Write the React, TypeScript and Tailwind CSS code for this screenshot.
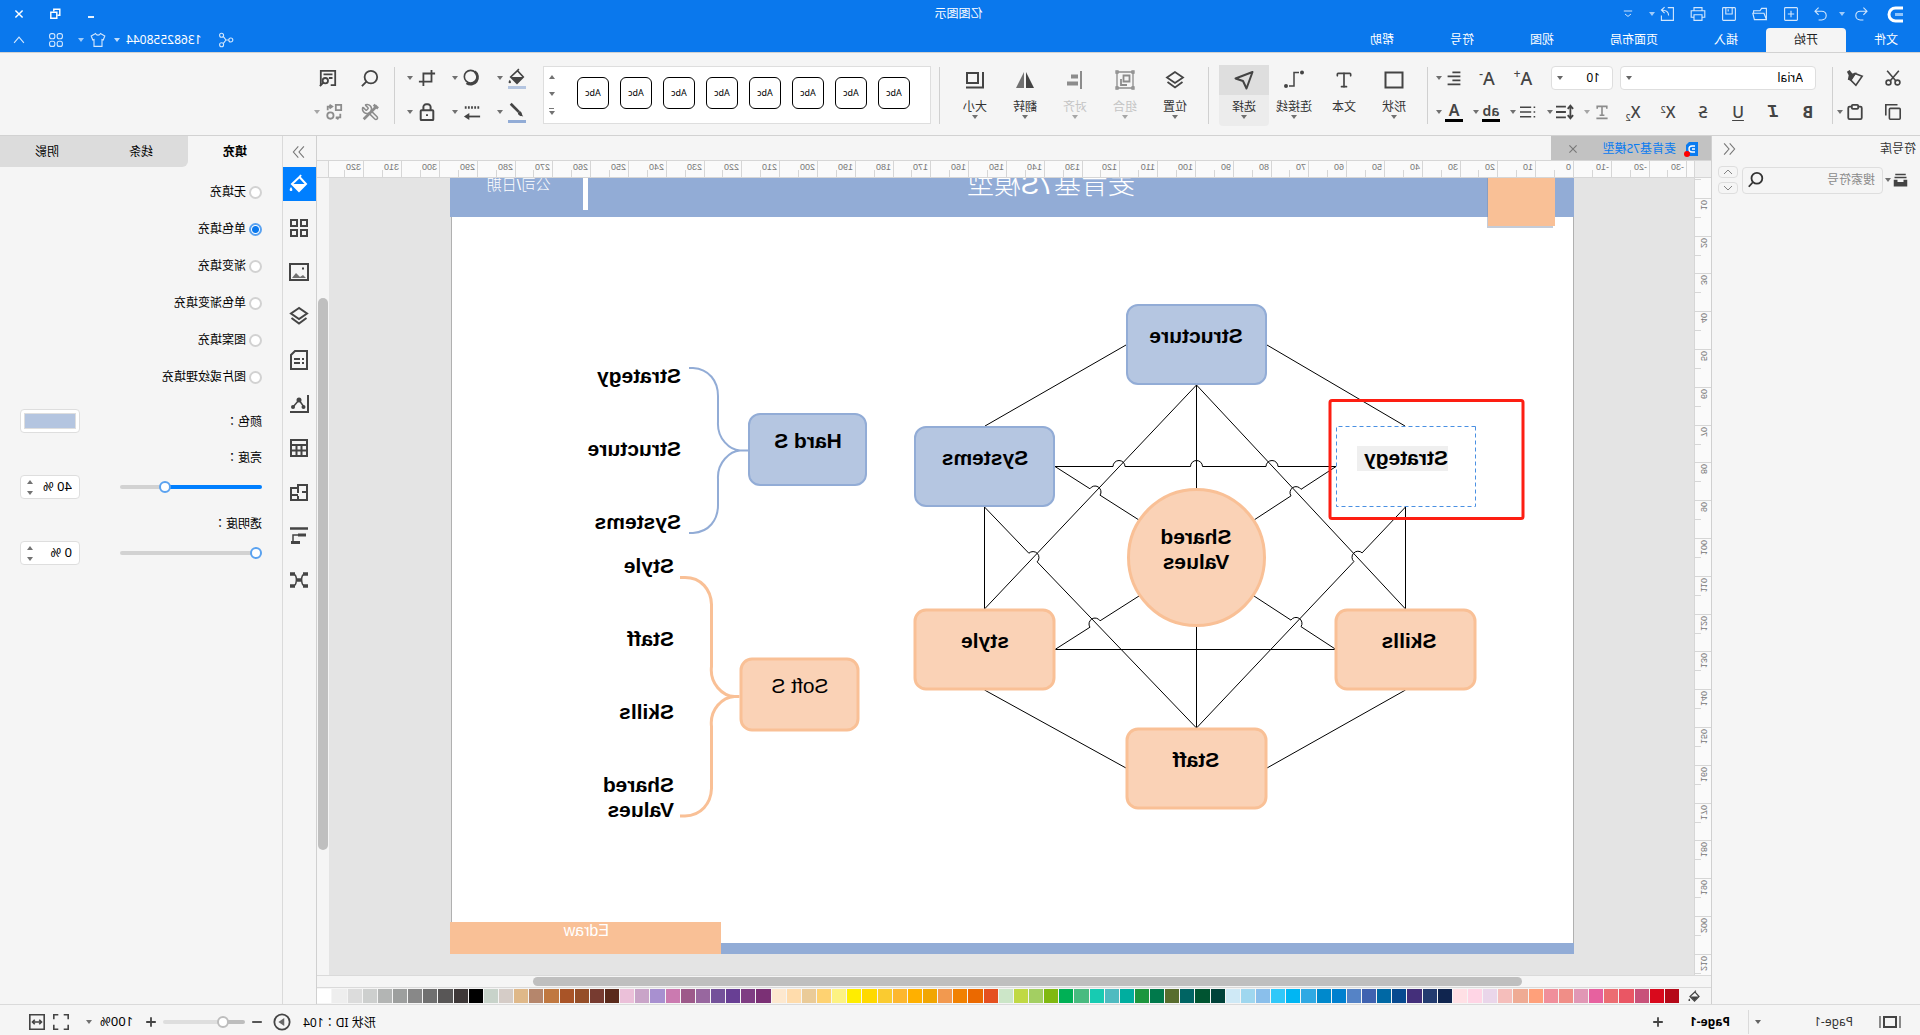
import React, { useState } from "react";
import clsx from "clsx";
import { Type, Wrench } from "lucide-react";

const menuTabs = ["文件", "开始", "插入", "页面布局", "视图", "符号", "帮助"];

const fillTypes = [
  "无填充",
  "单色填充",
  "渐变填充",
  "单色渐变填充",
  "图案填充",
  "图片或纹理填充",
];

const palette = [
  "#b50918", "#d9091c", "#c8527a", "#ea5664", "#ec6d72", "#e7619f", "#e197b5", "#f08e87", "#f08f9b", "#ffa07a",
  "#efab94", "#f5bebb", "#ead6ea", "#ffd5e5", "#ffe0e5", "#10254f", "#233b6f", "#442f7a", "#074a90", "#0068a4",
  "#3f62b0", "#5583c6", "#0080cf", "#0089cc", "#2fa9e3", "#00b6f3", "#30c8f9", "#8abfeb", "#9fd7ef", "#cfe9f6",
  "#00423a", "#005431", "#006463", "#586d2e", "#00794b", "#1c963e", "#00ae9f", "#4fbbc0", "#17cbb2", "#49bb80",
  "#00b055", "#80b910", "#a3cf62", "#c0d944", "#cce6c8", "#e5501f", "#eb6900", "#f18101", "#f2994f", "#f1a602",
  "#ffb000", "#fdb72f", "#facb30", "#ffd900", "#ffed00", "#fdf282", "#fed271", "#eacb98", "#ffdcac", "#fde8cf",
  "#7b3075", "#7f3d83", "#683f94", "#74529a", "#98679f", "#9d5a8a", "#cb7ab0", "#a890d0", "#c9a4c8", "#ebc0d9",
  "#5a2a1b", "#773b30", "#954e28", "#a95427", "#c07840", "#b5866c", "#dfb889", "#d5ccc7", "#c8d3ca", "#000000",
  "#3e3838", "#585656", "#707070", "#888888", "#9d9f9e", "#b3b5b4", "#cdcfce", "#dcdcdc", "#eeeeee", "#ffffff",
];

interface IconProps {
  children: React.ReactNode;
  size?: number;
  w?: number;
}

// every icon is drawn on a 20 x 20 grid
const Icon = ({ children, size = 20, w = 1.8 }: IconProps) => (
  <svg
    width={size}
    height={size}
    viewBox="0 0 20 20"
    fill="none"
    stroke="currentColor"
    strokeWidth={w}
    className="shrink-0"
  >
    {children}
  </svg>
);

const Caret = ({ up = false }: { up?: boolean }) => (
  <svg width="6" height="4" viewBox="0 0 6 4" className="shrink-0 opacity-75">
    <path d={up ? "M0 4h6L3 0z" : "M0 0h6L3 4z"} fill="currentColor" />
  </svg>
);

// full-width colon, centred in its cell
const Colon = () => <span className="font-['Noto_Sans_CJK_TC',sans-serif]">：</span>;

const Divider = () => <div className="h-[57px] w-px shrink-0 bg-[#d0d0d0]" />;

interface ToolProps {
  label: string;
  caret?: boolean;
  disabled?: boolean;
  wide?: boolean;
  children: React.ReactNode;
}

const Tool = ({ label, caret, disabled, wide, children }: ToolProps) => (
  <button
    aria-label={label}
    disabled={disabled}
    className={clsx(
      "flex h-6 shrink-0 items-center",
      wide ? "gap-1" : "gap-0.5",
      disabled ? "text-[#8c8c8c]" : "text-[#444444]"
    )}
  >
    <span className="flex w-5 justify-center">{children}</span>
    {caret && <Caret />}
  </button>
);

interface BigToolProps {
  label: string;
  active?: boolean;
  disabled?: boolean;
  caret?: boolean;
  children: React.ReactNode;
}

const BigTool = ({ label, active, disabled, caret = true, children }: BigToolProps) => (
  <button
    disabled={disabled}
    className={clsx(
      "flex h-[61px] w-[50px] shrink-0 flex-col items-center rounded-sm",
      active && "bg-[#ececec]",
      disabled ? "text-[#8c8c8c]" : "text-[#444444]"
    )}
  >
    <span className={clsx("flex h-[30px] w-full items-center justify-center", active && "bg-[#dedede]")}>
      {children}
    </span>
    <span className={clsx("mt-1 h-4 leading-4", disabled ? "text-[#c4c4c4]" : "text-[#333333]")}>{label}</span>
    {caret && (
      <span className="flex h-1">
        <Caret />
      </span>
    )}
  </button>
);

const BucketShape = () => (
  <>
    <path d="M8 1l1.500 2M9.500 3l7.500 7-7 7-7-7z" />
    <path d="M3.500 10h13l-6.500 6.500z" fill="currentColor" stroke="none" />
    <path d="M18 13c-2 2.500-1.500 4 0 4s2-1.500 0-4z" fill="currentColor" stroke="none" />
  </>
);

const LayersShape = () => (
  <>
    <path d="M10 2l8 5.500-8 5.500-8-5.500z" />
    <path d="M2.500 12l7.500 5.500 7.500-5.500" />
  </>
);

const Header = () => (
  <header className="bg-[#0a78ed] text-white">
    <div className="flex h-7 items-center">
      <div className="flex flex-1 items-center pl-4 text-[#d3e7fd]">
        <svg width="17" height="17" viewBox="0 0 17 17" fill="none" stroke="white" strokeWidth="3">
          <path d="M1 2h7.500a6.500 6.500 0 0 1 0 13H1" />
          <path d="M1 8.500h8" stroke="#8fc4fb" />
        </svg>
        <button aria-label="撤销" className="ml-[18px] flex items-center gap-2">
          <Icon size={16} w={1.4}>
            <path d="M7 2L2.500 6.500 7 11M3 6.500h8a5.500 5.500 0 0 1 0 11H7" />
          </Icon>
          <Caret />
        </button>
        <button aria-label="恢复" className="ml-[10px]">
          <Icon size={16} w={1.4}>
            <path d="M13 2l4.500 4.500L13 11M17 6.500H9a5.500 5.500 0 0 0 0 11h4" />
          </Icon>
        </button>
        <div className="ml-[14px] flex gap-[15px]">
          <button aria-label="新建">
            <Icon size={16} w={1.4}>
              <rect x="2" y="2" width="16" height="16" rx="1" />
              <path d="M10 6v8M6 10h8" />
            </Icon>
          </button>
          <button aria-label="打开">
            <Icon size={16} w={1.4}>
              <path d="M2 17V3h6l2 3h8v3M2 17L5 9h14l-2 8z" />
            </Icon>
          </button>
          <button aria-label="保存">
            <Icon size={16} w={1.4}>
              <rect x="2" y="2" width="16" height="16" rx="1" />
              <path d="M6 2v8h8V2M11 4v3" />
            </Icon>
          </button>
          <button aria-label="打印">
            <Icon size={16} w={1.4}>
              <path d="M5 6V2h10v4M5 14H1.500V6h17v8H15" />
              <path d="M5 11h10v7H5z" />
            </Icon>
          </button>
          <button aria-label="导出" className="flex items-center gap-1">
            <Icon size={16} w={1.4}>
              <path d="M9 2H2v16h15v-6" />
              <path d="M8 12c0-5 3-7 9-7M13 1.500L17 5l-4 4" />
            </Icon>
            <Caret />
          </button>
          <button aria-label="更多">
            <Icon size={12} w={1.6}>
              <path d="M3 5h14M5 10l5 4 5-4" />
            </Icon>
          </button>
        </div>
      </div>
      <h1 className="text-xs">亿图图示</h1>
      <div className="flex flex-1 items-center justify-end gap-6 pr-[13px]">
        <button aria-label="最小化">
          <Icon size={12} w={3}>
            <path d="M5 15h10" />
          </Icon>
        </button>
        <button aria-label="还原">
          <Icon size={12} w={2.4}>
            <path d="M6 12H2V2h10v4" />
            <path d="M7 7h10v10H7z" />
          </Icon>
        </button>
        <button aria-label="关闭">
          <Icon size={12} w={2.4}>
            <path d="M4 4l12 12M16 4L4 16" />
          </Icon>
        </button>
      </div>
    </div>
    <div className="flex h-6 items-stretch justify-between">
      <nav className="-ml-1.5 flex">
        {menuTabs.map((tab) => (
          <button key={tab} className={clsx("px-7 leading-6", tab === "开始" && "rounded-t-sm bg-[#f5f5f5] text-[#222222]")}>
            {tab}
          </button>
        ))}
      </nav>
      <div className="flex items-center pr-3 text-[#d3e7fd]">
        <button aria-label="分享">
          <Icon size={16} w={1.4}>
            <circle cx="4" cy="10" r="2.500" />
            <circle cx="15.500" cy="4" r="2.500" />
            <circle cx="15.500" cy="16" r="2.500" />
            <path d="M6.500 10H10l3.500-4.500M10 10l3.500 4.500" />
          </Icon>
        </button>
        <button className="ml-4 flex items-center gap-1.5 text-white">
          13682558044
          <Caret />
        </button>
        <button aria-label="主题" className="ml-2 flex items-center gap-1.5">
          <Icon size={16} w={1.4}>
            <path d="M7 2L1.500 5l2 5L5 9.500V18h10V9.500l1.500.5 2-5L13 2c-1 2.500-5 2.500-6 0z" />
          </Icon>
          <Caret />
        </button>
        <button aria-label="应用" className="ml-[14px]">
          <Icon size={16} w={1.4}>
            <rect x="2" y="2" width="6.500" height="6.500" rx="2.500" />
            <rect x="11.500" y="2" width="6.500" height="6.500" rx="2.500" />
            <rect x="2" y="11.500" width="6.500" height="6.500" rx="2.500" />
            <rect x="11.500" y="11.500" width="6.500" height="6.500" rx="2.500" />
          </Icon>
        </button>
        <button aria-label="收起功能区" className="ml-[22px]">
          <Icon size={14} w={1.6}>
            <path d="M3 14l7-8 7 8" />
          </Icon>
        </button>
      </div>
    </div>
  </header>
);

const Ribbon = () => (
  <div className="flex h-[84px] shrink-0 items-center overflow-hidden border-y border-[#d2d2d2] pt-0.5">
    <div className="flex w-[87px] shrink-0 flex-col gap-[10px] pl-[17px]">
      <div className="flex gap-[18px]">
        <Tool label="剪切">
          <Icon size={18}>
            <circle cx="5" cy="15" r="2.700" />
            <circle cx="15" cy="15" r="2.700" />
            <path d="M3.500 2l9.500 11M16.500 2L7 13" />
          </Icon>
        </Tool>
        <Tool label="格式刷">
          <Icon size={18}>
            <path d="M2 8l8-3 5 7-6 6z" />
            <path d="M8 4l5 1 3-4 3 2-2 4 1 5-4 1z" fill="currentColor" stroke="none" />
          </Icon>
        </Tool>
      </div>
      <div className="flex gap-[18px]">
        <Tool label="复制">
          <Icon size={18}>
            <rect x="2" y="6" width="12" height="12" rx="1" />
            <path d="M5 2h13v12" />
          </Icon>
        </Tool>
        <Tool label="粘贴" caret>
          <Icon size={18} w={2}>
            <rect x="2.500" y="4" width="15" height="14" rx="1.500" />
            <rect x="6.500" y="2" width="7" height="4.500" rx="1" fill="#f5f5f5" />
          </Icon>
        </Tool>
      </div>
    </div>
    <Divider />
    <div className="flex shrink-0 flex-col gap-[10px] pr-2 pl-4">
      <div className="flex">
        <div className="relative flex w-[196px] items-center">
          <select aria-label="字体" className="h-6 w-full appearance-none rounded-sm border border-[#dedede] bg-white px-3 text-black">
            <option>Arial</option>
          </select>
          <span className="pointer-events-none absolute right-1.5">
            <Caret />
          </span>
        </div>
        <div className="relative ml-[7px] flex w-[62px] items-center">
          <select aria-label="字号" className="h-6 w-full appearance-none rounded-sm border border-[#dedede] bg-white px-3 text-black">
            <option>10</option>
          </select>
          <span className="pointer-events-none absolute right-1.5">
            <Caret />
          </span>
        </div>
        <div className="ml-[15px] flex gap-4 text-lg">
          <Tool label="增大字号">
            <span className="flex pl-1.5 font-medium">
              A<sup className="top-1 text-xs leading-3">+</sup>
            </span>
          </Tool>
          <Tool label="减小字号">
            <span className="flex pl-1.5 font-medium">
              A<sup className="top-1 text-xs leading-3">-</sup>
            </span>
          </Tool>
          <Tool label="对齐方式" caret>
            <Icon size={16} w={2.2}>
              <path d="M2 3h10M2 8h16M2 13h10M2 18h16" />
            </Icon>
          </Tool>
        </div>
      </div>
      <div className="-ml-0.5 flex gap-[15px] text-base">
        <Tool label="加粗"><b>B</b></Tool>
        <Tool label="斜体"><b className="font-['Liberation_Mono'] text-lg italic">I</b></Tool>
        <Tool label="下划线"><span className="font-medium underline underline-offset-2">U</span></Tool>
        <Tool label="删除线"><span className="font-medium line-through">S</span></Tool>
        <Tool label="上标">
          <span className="flex font-medium">X<sup className="top-1 text-[9px] leading-3">2</sup></span>
        </Tool>
        <Tool label="下标">
          <span className="flex font-medium">X<sub className="top-3 text-[9px] leading-3">2</sub></span>
        </Tool>
        <div className="-ml-1 flex gap-[9px]">
          <Tool label="文字方向" caret disabled>
            <Icon size={16} w={2}>
              <path d="M4 6V3h12v3M10 3v11M7 14h6M3 18h14" />
            </Icon>
          </Tool>
          <Tool label="行距" caret>
            <Icon size={18} w={2}>
              <path d="M4 4v12M1 6.500L4 3l3 3.500M1 13.500L4 17l3-3.500M9 4h11M9 10h11M9 16h11" />
            </Icon>
          </Tool>
          <Tool label="项目符号" caret>
            <Icon size={16} w={2}>
              <path d="M1 4h2M1 10h2M1 16h2M6 4h14M6 10h14M6 16h14" />
            </Icon>
          </Tool>
          <Tool label="突出显示" caret>
            <span className="w-[18px] border-b-3 border-black text-center text-sm leading-[17px] font-semibold">ab</span>
          </Tool>
          <Tool label="字体颜色" caret>
            <span className="w-[18px] border-b-3 border-black text-center text-base leading-[17px] font-semibold">A</span>
          </Tool>
        </div>
      </div>
    </div>
    <Divider />
    <div className="flex pr-2.5 pl-2">
      <BigTool label="形状">
        <Icon w={2}><rect x="1.500" y="2.500" width="17" height="15" /></Icon>
      </BigTool>
      <BigTool label="文本" caret={false}>
        <Type size={20} />
      </BigTool>
      <BigTool label="连接线">
        <Icon w={1.5}>
          <circle cx="2" cy="2.500" r="2" fill="currentColor" stroke="none" />
          <circle cx="18" cy="16" r="2" fill="currentColor" stroke="none" />
          <path d="M5 2.500h5V16h5" />
        </Icon>
      </BigTool>
      <BigTool label="选择" active>
        <Icon w={2}><path d="M1.500 2l17 6.500-7.500 2.500-3.500 7.500z" strokeLinejoin="round" /></Icon>
      </BigTool>
    </div>
    <Divider />
    <div className="flex pr-2.5 pl-2">
      <BigTool label="位置"><Icon><LayersShape /></Icon></BigTool>
      <BigTool label="组合" disabled>
        <Icon w={1.3}>
          <path d="M2 2h16v16H2z" />
          <path d="M1 1h2v2H1zM17 1h2v2h-2zM1 17h2v2H1zM17 17h2v2h-2z" fill="#f5f5f5" />
          <path d="M5.500 5.500h6v6h-6zM14 9v6H8" strokeWidth="1.800" />
        </Icon>
      </BigTool>
      <BigTool label="对齐" disabled>
        <Icon w={2}>
          <path d="M4 1v18" />
          <path d="M7 6.500h7M7 13.500h11" strokeWidth="4" />
        </Icon>
      </BigTool>
      <BigTool label="翻转">
        <Icon>
          <path d="M9 2v16H1z" fill="currentColor" stroke="none" />
          <path d="M11 2v16h8z" fill="currentColor" stroke="none" opacity="0.750" />
        </Icon>
      </BigTool>
      <BigTool label="大小">
        <Icon w={2}><path d="M7 3h11v10H7zM2 2v15.500h17" /></Icon>
      </BigTool>
    </div>
    <Divider />
    <div className="ml-2 flex h-[58px] w-[388px] shrink-0 border border-[#dedede] bg-white pl-5">
      <div className="flex flex-1 items-center gap-[11px] pb-1">
        {Array.from({ length: 8 }, (_, i) => (
          <button key={i} className="size-8 rounded-md border border-black text-[9px] text-black">
            Abc
          </button>
        ))}
      </div>
      <div className="flex w-4 flex-col items-center justify-between py-2 text-[#444444]">
        <Caret up />
        <Caret />
        <span className="flex flex-col items-center gap-0.5">
          <span className="h-px w-[5px] bg-[#777777]" />
          <Caret />
        </span>
      </div>
    </div>
    <div className="flex flex-col gap-[10px] pr-3 pl-4">
      <div className="flex gap-[15px]">
        <Tool label="填充" caret wide>
          <span className="border-b-3 border-[#b4c5e0]"><Icon size={18}><BucketShape /></Icon></span>
        </Tool>
        <Tool label="阴影" caret wide>
          <Icon size={18}>
            <circle cx="11.500" cy="8.500" r="7" />
            <path d="M7 3a7.500 7.500 0 1 0 9 12.500" strokeWidth="3" />
          </Icon>
        </Tool>
        <Tool label="裁剪" caret wide>
          <Icon size={18} w={2}><path d="M5 1v13h14M1 5h13v14" /></Icon>
        </Tool>
      </div>
      <div className="flex gap-[15px]">
        <Tool label="线条" caret wide>
          <span className="border-b-3 border-[#92acd6]">
            <Icon size={18}>
              <path d="M17 2L8 11" strokeWidth="3" />
              <path d="M7 10c-3 1-2 4-4 6 3 0 6-1 6-4z" fill="currentColor" stroke="none" />
            </Icon>
          </span>
        </Tool>
        <Tool label="线型" caret wide>
          <Icon size={18} w={2}>
            <path d="M2 5h16" strokeWidth="3" strokeDasharray="2 1.500" />
            <path d="M1 15h14" />
            <path d="M13 11l6 4-6 4z" fill="currentColor" stroke="none" />
          </Icon>
        </Tool>
        <Tool label="锁定" caret wide>
          <Icon size={18} w={2.2}>
            <rect x="3" y="8" width="14" height="11" rx="1" />
            <path d="M6 8V4.500a3 3 0 0 1 3-3h2a3 3 0 0 1 3 3V8M10 12.500v2" />
          </Icon>
        </Tool>
      </div>
    </div>
    <Divider />
    <div className="flex flex-col gap-[10px] pl-[14px]">
      <div className="flex gap-[22px]">
        <Tool label="查找">
          <Icon size={18} w={2}>
            <circle cx="9" cy="9" r="7" />
            <path d="M14 14l5 5" />
          </Icon>
        </Tool>
        <Tool label="替换">
          <Icon size={18} w={2}>
            <path d="M7 18H2V2h16v16M5 6h10M5 10h4" />
            <circle cx="13" cy="13" r="3" fill="#f5f5f5" />
            <path d="M15.500 15.500l3.500 3.500" />
          </Icon>
        </Tool>
      </div>
      <div className="flex gap-4">
        <Tool label="工具" disabled>
          <span className="relative">
            <Wrench size={18} />
            <svg width="18" height="18" viewBox="0 0 20 20" className="absolute inset-0" stroke="currentColor" strokeWidth="3">
              <path d="M2 3l15 15M1 6l5-4" />
            </svg>
          </span>
        </Tool>
        <Tool label="替换形状" caret wide disabled>
          <Icon size={18} w={2}>
            <path d="M2 2h6v6H2z" />
            <circle cx="14" cy="14" r="3.500" />
            <path d="M12 4h5v4M15 2l-3 2 3 2M8 16H3v-4M5 18l3-2" />
          </Icon>
        </Tool>
      </div>
    </div>
  </div>
);

const SymbolPanel = () => (
  <aside className="w-[209px] shrink-0 border-r border-[#d0d0d0]">
    <div className="flex h-6 items-center justify-between pt-0.5 pr-2.5 pl-1">
      <h2>符号库</h2>
      <button aria-label="收起" className="text-[#777777]">
        <Icon size={14} w={1.6}>
          <path d="M9 2L2 10l7 8M17 2l-7 8 7 8" />
        </Icon>
      </button>
    </div>
    <div className="mt-1.5 flex items-center pr-1.5 pl-3">
      <button aria-label="符号库菜单" className="flex items-center gap-0.5 text-[#444444]">
        <Icon size={15}>
          <path d="M3 2h14M2 6h16" />
          <path d="M1 9h5v3h8V9h5v9H1z" fill="currentColor" stroke="none" />
        </Icon>
        <Caret />
      </button>
      <div className="ml-0.5 flex h-[27px] w-[141px] items-center rounded-sm border border-[#dedede] pr-1 pl-[7px]">
        <input aria-label="搜索" placeholder="搜索符号" className="w-full min-w-0 flex-1 placeholder:text-[#8a8a8a]" />
        <Icon size={18} w={2}>
          <circle cx="9" cy="8" r="6" />
          <path d="M13.500 12.500l4.500 5" />
        </Icon>
      </div>
      <div className="ml-1 flex flex-col gap-1 text-[#777777]">
        <button aria-label="上一个" className="flex h-3 w-5 items-center justify-center rounded-sm border border-[#dedede]">
          <Icon size={10}><path d="M2 14l8-8 8 8" /></Icon>
        </button>
        <button aria-label="下一个" className="flex h-3 w-5 items-center justify-center rounded-sm border border-[#dedede]">
          <Icon size={10}><path d="M2 6l8 8 8-8" /></Icon>
        </button>
      </div>
    </div>
  </aside>
);

// pixels per ten millimetres at 100% zoom
const STEP = 37.8;

const HorizontalRuler = () => (
  <svg className="h-4 min-w-0 flex-1 bg-[#fafafa] font-['Liberation_Sans',sans-serif]">
    {Array.from({ length: 36 }, (_, i) => {
      const n = i - 3;
      const x = Math.round(120 + n * STEP);
      return (
        <g key={n}>
          <path d={`M${x + 0.5} 0v16M${x + 19.5} 9v7`} stroke="#d6d6d6" />
          {n < 33 && (
            <text x={x + 3} y="9" className="fill-[#777777] text-[9px]">
              {n * 10}
            </text>
          )}
        </g>
      );
    })}
  </svg>
);

const VerticalRuler = () => (
  <svg className="w-[17px] shrink-0 border-r border-[#d6d6d6] bg-[#fafafa] font-['Liberation_Sans',sans-serif]">
    {Array.from({ length: 22 }, (_, n) => {
      const y = Math.round(n * STEP - 18);
      return (
        <g key={n}>
          <path d={`M0 ${y + 0.5}h17M10 ${y + 19.5}h7`} stroke="#d6d6d6" />
          {n > 0 && (
            <text transform={`translate(10 ${y + 2}) rotate(-90)`} textAnchor="end" className="fill-[#777777] text-[9px]">
              {n * 10}
            </text>
          )}
        </g>
      );
    })}
  </svg>
);

// straight connector with a small bridge at each x in hops
const connector = (x1: number, y1: number, x2: number, y2: number, hops: number[] = []) => {
  const len = Math.hypot(x2 - x1, y2 - y1);
  const dx = ((x2 - x1) / len) * 6;
  const dy = ((y2 - y1) / len) * 6;
  const bridges = hops.map((x) => {
    const y = y1 + ((y2 - y1) * (x - x1)) / (x2 - x1);
    return `L${x - dx} ${y - dy}A6 6 0 0 1 ${x + dx} ${y + dy}`;
  });
  return `M${x1} ${y1}${bridges.join("")}L${x2} ${y2}`;
};

const connectors = [
  connector(515, 426, 653, 345),
  connector(794, 345, 935, 426),
  connector(514.5, 507, 514.5, 609),
  connector(935.5, 507, 935.5, 609),
  connector(514.5, 609, 723.5, 385),
  connector(723.5, 385, 935.5, 609),
  connector(723.5, 385, 723.5, 488),
  connector(723.5, 627, 723.5, 728),
  connector(514.5, 507, 723.5, 728, [562]),
  connector(723.5, 728, 935.5, 507, [887]),
  connector(584, 466.5, 865, 466.5, [648, 723.5, 801]),
  connector(584, 649.5, 865, 649.5),
  connector(584, 466.5, 666, 520, [624]),
  connector(781, 520, 865, 466.5, [825]),
  connector(584, 649.5, 666, 596, [624]),
  connector(781, 596, 865, 649.5, [825]),
  connector(514.5, 690, 653, 768),
  connector(794, 768, 935.5, 690),
];

const nodes = [
  { text: "Structure", x: 654, y: 305, w: 139, h: 79, tx: 724, ty: 343, blue: true },
  { text: "Systems", x: 866, y: 427, w: 139, h: 79, tx: 935, ty: 465, blue: true },
  { text: "style", x: 866, y: 610, w: 139, h: 79, tx: 935, ty: 648 },
  { text: "Skills", x: 445, y: 610, w: 139, h: 79, tx: 511, ty: 648 },
  { text: "Staff", x: 654, y: 729, w: 139, h: 79, tx: 724, ty: 767 },
  { text: "Hard S", x: 1054, y: 414, w: 117, h: 71, tx: 1112, ty: 448, blue: true },
  { text: "Soft S", x: 1062, y: 659, w: 117, h: 71, tx: 1120, ty: 693, regular: true },
];

const labels = [
  { text: "Strategy", x: 1239, y: 383 },
  { text: "Structure", x: 1239, y: 456 },
  { text: "Systems", x: 1239, y: 529 },
  { text: "Style", x: 1246, y: 573 },
  { text: "Staff", x: 1246, y: 646 },
  { text: "Skills", x: 1246, y: 719 },
  { text: "Shared", x: 1246, y: 792 },
  { text: "Values", x: 1246, y: 817 },
];

const Diagram = () => (
  <svg
    width="1400"
    height="800"
    viewBox="226 178 1400 800"
    fill="none"
    className="absolute top-0 left-0 font-['Liberation_Sans','Noto_Sans_CJK_SC',sans-serif]"
  >
    <rect x="346.500" y="100.500" width="1122" height="853" fill="white" stroke="#b0b0b0" />
    <rect x="346" y="100" width="1124" height="117" fill="#92acd6" />
    <rect x="367" y="100" width="66" height="128" fill="#7f8ea8" opacity="0.450" />
    <rect x="365" y="100" width="67" height="126" fill="#f9c096" />
    <rect x="1332" y="100" width="5" height="110" fill="white" />
    <text x="785" y="194" className="fill-white text-[27px] font-light">麦肯基7S模型</text>
    <text x="1369" y="190" className="fill-white text-[15px] font-light">公司/日期</text>
    <rect x="346" y="943" width="853" height="11" fill="#92acd6" />
    <rect x="1199" y="922" width="271" height="32" fill="#f9c096" />
    <text x="1311" y="936" className="fill-white text-[16px]">Edraw</text>

    {connectors.map((d) => (
      <path key={d} d={d} stroke="black" />
    ))}
    <g className="text-[21px]">
      {nodes.map((n) => (
        <g key={n.text}>
          <rect
            x={n.x}
            y={n.y}
            width={n.w}
            height={n.h}
            rx="11"
            fill={n.blue ? "#b5c6e1" : "#fad2b6"}
            stroke={n.blue ? "#92acd6" : "#f9c096"}
            strokeWidth={n.blue ? 2 : 3}
          />
          <text x={n.tx} y={n.ty} textAnchor="middle" fill="black" className={n.regular ? "font-normal" : "font-bold"}>
            {n.text}
          </text>
        </g>
      ))}
      <circle cx="723.500" cy="557.500" r="68" fill="#fad2b6" stroke="#f9c096" strokeWidth="3" />
      <text x="724" y="544" textAnchor="middle" fill="black" className="font-bold">Shared</text>
      <text x="724" y="569" textAnchor="middle" fill="black" className="font-bold">Values</text>

      <rect x="444.500" y="426.500" width="139" height="80" fill="white" stroke="#4a90e2" strokeDasharray="4 3" />
      <rect x="472" y="446" width="91" height="25" fill="#efefef" />
      <text x="514" y="465" textAnchor="middle" fill="black" className="font-bold">Strategy</text>

      {labels.map((l) => (
        <text key={l.text + l.y} x={l.x} y={l.y} fill="black" className="font-bold">
          {l.text}
        </text>
      ))}
    </g>
    <rect x="397" y="400.500" width="193" height="118" rx="2" stroke="#fd1e12" strokeWidth="3" />
    <path
      d="M1231 368h-4c-16 1-25 13-25 28v26c1 17-12 28-22 28.500h-8h8c10 .5 23 12 22 28.500v26c0 15 9 27 25 28h4"
      stroke="#92acd6"
      strokeWidth="2"
    />
    <path
      d="M1240 577.500h-5c-16 0-26 12-26.500 27v62c2 17-11 29.500-23 30h-5h5c12 .5 25 13 23 30v62c.5 15 10.500 27 26.500 27.500h5"
      stroke="#f9c096"
      strokeWidth="3"
    />
  </svg>
);

const Workspace = () => (
  <main className="flex min-w-0 flex-1 flex-col">
    <div className="flex h-6 shrink-0">
      <div className="flex w-40 items-center bg-[#c2c2c2] pt-0.5 pl-[13px] text-[#0a7bf0]">
        <span className="relative">
          <svg width="12" height="14" viewBox="0 0 12 14" fill="none">
            <path d="M0 0h9l3 3v11H0z" fill="#0a7bf0" />
            <path d="M3 4h3a3 3 0 0 1 0 6H3M3 7h3" stroke="white" strokeWidth="1.400" />
          </svg>
          <span className="absolute -right-[2px] -bottom-[1px] size-1.5 rounded-full bg-[#ff0000]" />
        </span>
        <span className="ml-2.5 flex-1">麦肯基7S模型</span>
        <button aria-label="关闭文档" className="mr-4 text-[#777777]">
          <Icon size={12}><path d="M4 4l12 12M16 4L4 16" /></Icon>
        </button>
      </div>
    </div>
    <div className="flex h-[18px] shrink-0 border-y border-[#d6d6d6]">
      <div className="w-[17px] shrink-0 border-r border-[#d6d6d6] bg-[#efefef]" />
      <HorizontalRuler />
      <div className="w-3 border-l border-[#d6d6d6]" />
    </div>
    <div className="flex min-h-0 flex-1">
      <VerticalRuler />
      <div className="relative min-w-0 flex-1 overflow-hidden bg-[#e4e4e4]">
        <Diagram />
      </div>
      <div className="w-3 shrink-0 pt-[120px]">
        <div className="mx-px h-[552px] rounded-full bg-[#bfbfbf]" />
      </div>
    </div>
    <div className="h-[13px] shrink-0 border-y border-[#dadada] pt-px pr-[216px] pl-[189px]">
      <div className="h-[9px] rounded-full bg-[#bfbfbf]" />
    </div>
    <div className="flex h-4 shrink-0 items-center text-[#444444]">
      <span className="flex w-8 justify-center">
        <Icon size={13}><BucketShape /></Icon>
      </span>
      <div className="flex min-w-0 flex-1 gap-px">
        {palette.map((color) => (
          <button key={color} aria-label={color} className="h-[14px] min-w-0 flex-1" style={{ backgroundColor: color }} />
        ))}
      </div>
    </div>
  </main>
);

const sideIcons = [
  <path key="grid" d="M2 2h6v6H2zM12 2h6v6h-6zM2 12h6v6H2zM12 12h6v6h-6z" />,
  <g key="image">
    <path d="M1 2h18v16H1z" />
    <path d="M3 16l3-3 3 2 4-4 4 5z" fill="currentColor" stroke="none" opacity="0.750" />
    <path d="M5 6.500h2" />
  </g>,
  <LayersShape key="layers" />,
  <path key="page" d="M2 1h12l4 4v14H2zM5 9h2M9 9h6M5 13h2M9 13h6" />,
  <g key="chart">
    <path d="M1 1v17h18" />
    <path d="M5 13l5-7 6 7" strokeWidth="1.500" />
    <circle cx="5.500" cy="13" r="2" fill="currentColor" stroke="none" />
    <circle cx="10" cy="6" r="2.500" fill="currentColor" stroke="none" />
    <circle cx="16" cy="13" r="2" fill="currentColor" stroke="none" />
  </g>,
  <path key="table" d="M2 2h16v16H2zM2 7h16M2 12.500h16M7.500 7v11M12.500 7v11" />,
  <path key="plan" d="M2 3h9v3h7v12H2zM2 10h5M11 6v5M11 18v-4M11 13h7" />,
  <g key="gantt">
    <path d="M1 2.500h18" strokeWidth="2.500" />
    <path d="M11 9h5v6" strokeWidth="1.500" />
    <path d="M3 9h8" strokeWidth="3" />
    <path d="M9 16.500h9" strokeWidth="3" />
  </g>,
  <g key="mindmap">
    <path d="M4 4c5 0 4 12 0 12M16 4c-5 0-4 12 0 12M7 10h6" strokeWidth="1.500" />
    <path d="M1 4h5M14 4h5M1 16h5M14 16h5M8 10h4" strokeWidth="3.500" />
  </g>,
];

const Percent = ({ label, value }: { label: string; value: string }) => (
  <div className="flex h-6 w-[60px] items-center rounded-sm border border-[#dedede] bg-white pr-1.5 pl-[7px]">
    <input aria-label={label} defaultValue={value} className="w-full min-w-0 flex-1 text-[13px] text-black" />
    <span className="flex flex-col gap-[7px] text-[#444444]">
      <Caret up />
      <Caret />
    </span>
  </div>
);

const PropertyPanel = () => {
  const [fill, setFill] = useState("单色填充");

  return (
    <aside className="flex w-[317px] shrink-0 border-l border-[#d0d0d0]">
      <div className="flex w-[34px] shrink-0 flex-col items-center border-r border-[#dadada] text-[#444444]">
        <button aria-label="展开" className="flex h-[31px] items-center text-[#777777]">
          <Icon size={14} w={1.6}><path d="M3 2l7 8-7 8M11 2l7 8-7 8" /></Icon>
        </button>
        <button aria-label="填充面板" className="flex h-[34px] w-full items-center justify-center bg-[#007fff] text-white">
          <Icon w={2}><BucketShape /></Icon>
        </button>
        <div className="mt-[17px] flex flex-col gap-6">
          {sideIcons.map((shape) => (
            <button key={shape.key} aria-label={String(shape.key)}>
              <Icon size={20} w={2}>{shape}</Icon>
            </button>
          ))}
        </div>
      </div>
      <div className="flex-1 text-black">
        <div className="grid h-[31px] grid-cols-3">
          <button className="font-bold">填充</button>
          <button className="rounded-bl-md bg-[#dcdcdc]">线条</button>
          <button className="bg-[#dcdcdc]">阴影</button>
        </div>
        <div className="flex flex-col gap-[17px] px-5 pt-[15px]">
          {fillTypes.map((type) => (
            <label key={type} className="flex h-5 items-center gap-[3px]">
              <input
                type="radio"
                name="fill"
                checked={fill === type}
                onChange={() => setFill(type)}
                className="size-[13px] appearance-none rounded-full border-2 border-[#d2d2d2] bg-white checked:border-[#5aa2f0] checked:bg-[radial-gradient(circle,#0a78ed_0_3px,white_4px)]"
              />
              {type}
            </label>
          ))}
        </div>
        <div className="flex flex-col px-5 pt-[22px]">
          <div className="flex h-6 items-center justify-between">
            <span>颜色<Colon /></span>
            <button aria-label="颜色" className="h-6 w-[60px] rounded-sm border border-[#dedede] bg-white p-[3px]">
              <span className="block h-full border border-[#dedede] bg-[#b4c5e0]" />
            </button>
          </div>
          <label htmlFor="brightness" className="mt-[14px] h-5 leading-5">亮度<Colon /></label>
          <div className="mt-2 flex h-6 items-center justify-between">
            <input
              id="brightness"
              type="range"
              min="-100"
              max="100"
              defaultValue="40"
              className="h-1 w-[142px] appearance-none rounded-full bg-[linear-gradient(to_right,#007fff_68%,#d2d2d2_68%)] [&::-webkit-slider-thumb]:size-3 [&::-webkit-slider-thumb]:appearance-none [&::-webkit-slider-thumb]:rounded-full [&::-webkit-slider-thumb]:border-2 [&::-webkit-slider-thumb]:border-[#5aa2f0] [&::-webkit-slider-thumb]:bg-white"
            />
            <Percent label="亮度值" value="40 %" />
          </div>
          <label htmlFor="opacity" className="mt-[14px] h-5 leading-5">透明度<Colon /></label>
          <div className="mt-2 flex h-6 items-center justify-between">
            <input
              id="opacity"
              type="range"
              defaultValue="0"
              className="h-1 w-[142px] appearance-none rounded-full bg-[#d2d2d2] [&::-webkit-slider-thumb]:size-3 [&::-webkit-slider-thumb]:appearance-none [&::-webkit-slider-thumb]:rounded-full [&::-webkit-slider-thumb]:border-2 [&::-webkit-slider-thumb]:border-[#5aa2f0] [&::-webkit-slider-thumb]:bg-white"
            />
            <Percent label="透明度值" value="0 %" />
          </div>
        </div>
      </div>
    </aside>
  );
};

const StatusBar = () => (
  <footer className="flex h-[31px] shrink-0 items-center border-t border-[#dadada] pt-1 text-black">
    <button aria-label="页面视图" className="ml-[19px] text-[#444444]">
      <svg width="22" height="14" viewBox="0 0 22 14" fill="none" stroke="currentColor" strokeWidth="2">
        <rect x="5" y="2" width="12" height="10" />
        <path d="M1 1v12M21 1v12" strokeWidth="1.500" opacity="0.800" />
      </svg>
    </button>
    <button className="ml-[26px] flex w-[98px] items-center justify-between text-[#333333]">
      Page-1
      <Caret />
    </button>
    <div className="ml-1.5 h-6 w-px bg-[#dadada]" />
    <button className="ml-[18px] font-bold">Page-1</button>
    <button aria-label="添加页面" className="ml-[26px] text-[#444444]">
      <Icon size={12} w={3}><path d="M10 2v16M2 10h16" /></Icon>
    </button>
    <div className="ml-auto flex items-center pr-7 text-[#444444]">
      <span className="mr-3 text-black">形状 ID<Colon />104</span>
      <button aria-label="播放">
        <Icon size={18} w={2}>
          <circle cx="10" cy="10" r="8.500" />
          <path d="M7.500 5.500v9l6.500-4.500z" fill="currentColor" stroke="none" opacity="0.800" />
        </Icon>
      </button>
      <button aria-label="缩小" className="ml-[10px]">
        <Icon size={12} w={3}><path d="M2 10h16" /></Icon>
      </button>
      <input
        type="range"
        aria-label="缩放"
        max="400"
        defaultValue="90"
        className="mx-1.5 h-1 w-[82px] appearance-none rounded-full bg-[linear-gradient(to_right,#bdbdbd_27%,#dedede_27%)] [&::-webkit-slider-thumb]:size-3 [&::-webkit-slider-thumb]:appearance-none [&::-webkit-slider-thumb]:rounded-full [&::-webkit-slider-thumb]:border-2 [&::-webkit-slider-thumb]:border-[#bdbdbd] [&::-webkit-slider-thumb]:bg-white"
      />
      <button aria-label="放大">
        <Icon size={12} w={3}><path d="M10 2v16M2 10h16" /></Icon>
      </button>
      <button className="ml-3 flex items-center gap-2">
        <span className="text-[13px] text-black">100%</span>
        <Caret />
      </button>
      <button aria-label="全屏" className="ml-4">
        <Icon size={18}><path d="M2 7V2h5M13 2h5v5M18 13v5h-5M7 18H2v-5" /></Icon>
      </button>
      <button aria-label="适应页宽" className="ml-1.5">
        <Icon size={18}><path d="M2 2h16v16H2zM5 10h10M7.500 7.500L5 10l2.500 2.500M12.500 7.500L15 10l-2.500 2.500" /></Icon>
      </button>
    </div>
  </footer>
);

export default function App() {
  return (
    <div className="flex h-screen -scale-x-100 flex-col overflow-hidden bg-[#f5f5f5] font-['Noto_Sans','Noto_Sans_CJK_SC',sans-serif] text-xs text-[#333333]">
      <Header />
      <Ribbon />
      <div className="flex min-h-0 flex-1">
        <SymbolPanel />
        <Workspace />
        <PropertyPanel />
      </div>
      <StatusBar />
    </div>
  );
}
